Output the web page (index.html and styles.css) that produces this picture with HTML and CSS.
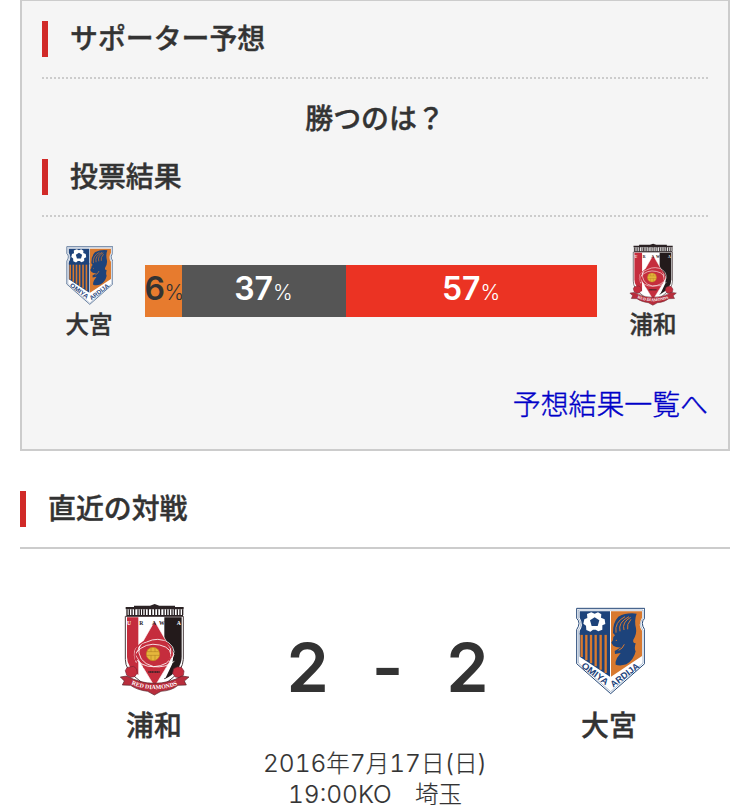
FILE: index.html
```html
<!DOCTYPE html>
<html lang="ja">
<head>
  <meta charset="utf-8">
  <title>サポーター予想</title>
  <link rel="stylesheet" href="styles.css">
</head>

<body>
  <div class="support">
    <h3 class="title">サポーター予想</h3>
    <p class="question">勝つのは？</p>
    <h3 class="title">投票結果</h3>
    <div class="vote">
      <div class="vote-team">
        <svg class="emblem-small" viewBox="30 27 213 279">
          <g id="omiya">
            <path d="M38 43h204v30q-14 13 0 34v102l-102 90-102-90v-102q14-21 0-34z" fill="#fff" stroke="#254878" stroke-width="3"/>
            <path d="M43 48h194v25q-15 15 0 36v98l-97 86-97-86v-98q15-21 0-36z" fill="#fff" stroke="#5c7ba5" stroke-width="1.5"/>
            <path d="M47 52h91v196L47 188v-78q13-18 0-39z" fill="#1d437b"/>
            <path d="M141 52h93v19q-13 21 0 39v76l-93 62z" fill="#d8792f"/>
            <path d="M53 122v67M67 122v77M81 122v86M95 122v95M110 122v105M125 122v115" stroke="#d8792f" stroke-width="7"/>
            <path d="M47 119h91" stroke="#1d437b" stroke-width="5"/>
            <path d="M82 55l10 4 10-4 10 6-1 10 11 5 2 14-9 4v13l-12 5-8-5h-8l-8 6-12-5-1-13-8-6 3-13 9-4-1-12z" fill="#fff"/>
            <path d="M92 70l14 9-5 17H83l-5-17z" fill="#1d437b"/>
            <path d="M218 59q-30-4-55 9-17 18-16 49l6 7q-7 4-6 14l-5 8 6 9q10 7 23 5l-19 11 1 9 17-3-11 15q-6 12-4 20 13 5 32-1 22-12 28-39-5-7 0-24-10-2-7-11 11-17 8-34-6-24 2-44z" fill="#1d437b"/>
            <path d="M156 116q-5-32 27-48M168 112q-7-27 27-44M180 108q-7-23 20-38M191 106q-4-15 10-30M181 151q-5 13-17 18" stroke="#d8792f" stroke-width="3" fill="none"/>
            <circle cx="157" cy="139" r="2" fill="#d8792f"/>
            <path id="omiya-left" d="M50 218l90 67" fill="none"/>
            <path id="omiya-right" d="M148 281l90-69" fill="none"/>
            <text class="omiya-text"><textPath href="#omiya-left" textLength="94" lengthAdjust="spacingAndGlyphs">OMIYA</textPath></text>
            <text class="omiya-text"><textPath href="#omiya-right" textLength="100" lengthAdjust="spacingAndGlyphs">ARDIJA</textPath></text>
          </g>
        </svg>
        <span>大宮</span>
      </div>
      <div class="graph">
        <div class="home" style="width: 37px">6<small>%</small></div>
        <div class="draw" style="width: 164px">37<small>%</small></div>
        <div class="away" style="width: 251px">57<small>%</small></div>
      </div>
      <div class="vote-team">
        <svg class="emblem-small" viewBox="30 24 213 279">
          <g id="urawa">
            <path d="M49 64h174v129q-2 32-34 57l-53 42-53-42q-34-25-34-57z" fill="#fff" stroke="#4a3c3e" stroke-width="3"/>
            <path d="M50 36h25v-4h48l14-5 14 5h47v4h26v7H50zM52 60h170v4H52z" fill="#2b2224"/>
            <path d="M54 43v17M61 43v17M69 43v17M77 36v26M87 43v17M94 43v17M101 43v17M109 43v17M118 36v26M128 43v17M137 32v30M146 43v17M155 36v26M165 43v17M173 43v17M181 43v17M189 43v17M196 36v26M205 43v17M213 43v17M221 43v17" stroke="#2b2224" stroke-width="4"/>
            <path d="M54 67h34v173q-34-24-34-54z" fill="#c52d3d"/>
            <path d="M166 67h52v118q0 42-52 68z" fill="#231a1b"/>
            <path d="M174 148q26 18 16 58l-20 42-14 5 12-52z" fill="#fff"/>
            <path d="M137 78l58 101-58 96-58-96z" fill="#c52d3d" stroke="#fff" stroke-width="2"/>
            <g fill="none" stroke="#fff" stroke-width="2.5">
              <path d="M82 203q-21-49 31-62 34-17 66 2 31 25 2 57"/>
              <path d="M80 174q30-34 72-24 43 9 32 46"/>
              <path d="M91 151q-10 50 43 64 35 4 62-16"/>
              <path d="M184 162q13 38-30 50-42 11-70-16"/>
            </g>
            <path d="M80 197q-10-43 32-61M166 139q38 20 14 58M103 216q27 15 60 2" fill="none" stroke="#c52d3d" stroke-width="4"/>
            <circle cx="132" cy="177" r="20" fill="#e5b63c" stroke="#c48620" stroke-width="2"/>
            <path d="M114 170h35M113 181h38M126 158v12M138 158v12M126 181v15M138 181v15" stroke="#a9761e" stroke-width="1.5" fill="none"/>
            <path d="M118 231h34" stroke="#51232a" stroke-width="6" stroke-dasharray="4 1"/>
            <g class="urawa-name"><text x="54" y="91">U</text><text class="dark" x="91" y="91">R</text><text class="dark" x="129" y="91">A</text><text class="dark" x="150" y="91">W</text><text x="203" y="91">A</text></g>
            <g fill="#c52d3d" stroke="#762333" stroke-width="2">
              <path d="M62 216l12-2 9 8 2 12-8 11-13 2-11-7-4-13 5-9z"/>
              <path d="M205 216l12 1 8 11-2 13-12 7-12-2-8-11 3-14z"/>
            </g>
            <path d="M34 246l20-3q38 22 82 22t83-22l21 3-14 12 6 12-25 1q-19 16-51 18l-20 11-20-11q-32-4-51-18l-25-1 6-12z" fill="#b82d3c" stroke="#552129" stroke-width="2"/>
            <path id="ribbon" d="M67 268q70 29 142 0" fill="none"/>
            <text class="ribbon-text"><textPath href="#ribbon" textLength="142" lengthAdjust="spacingAndGlyphs">RED DIAMONDS</textPath></text>
          </g>
        </svg>
        <span>浦和</span>
      </div>
    </div>
    <div class="more"><a href="#">予想結果一覧へ</a></div>
  </div>

  <div class="recent">
    <h3 class="title">直近の対戦</h3>
    <div class="match">
      <div class="team">
        <svg class="emblem" viewBox="30 24 213 279"><use href="#urawa"/></svg>
        <span>浦和</span>
      </div>
      <div class="score"><span>2</span><span>-</span><span>2</span></div>
      <div class="team">
        <svg class="emblem" viewBox="30 27 213 279"><use href="#omiya"/></svg>
        <span>大宮</span>
      </div>
    </div>
    <p class="date"><span class="num">2016</span>年<span class="num">7</span>月<span class="num">17</span>日<span class="num">(</span>日<span class="num">)</span><br><span class="num">19:00KO</span>　埼玉</p>
  </div>
</body>

</html>
```

FILE: styles.css
```css
* {
  box-sizing: border-box;
}

body {
  margin: 0;
  height: 805px;
  overflow: hidden;
  color: #333;
  background-color: white;
  font-family: Inter, "Noto Sans CJK JP", sans-serif;
}

.support {
  height: 451px;
  margin: 0 20px;
  padding: 20px 20px 0;
  background-color: #f5f5f5;
  border: 2px solid #ccc;
  border-top-width: 1px;
}

.title, .question, .vote-team, .team {
  font-weight: 500;
  -webkit-text-stroke: 0.4px #333;
}

.title {
  display: flex;
  align-items: center;
  height: 58px;
  margin: 0;
  padding-bottom: 20px;
  border-bottom: 2px dotted #ccc;
  font-size: 27.9px;
  line-height: 36px;
}

.title::before {
  content: "";
  width: 6px;
  height: 36px;
  margin-right: 22px;
  background-color: #d12a28;
}

.question {
  margin: 0;
  height: 80px;
  line-height: 80px;
  text-align: center;
  font-size: 27.9px;
}

.vote {
  display: flex;
  justify-content: space-between;
  margin-top: 26px;
}

.vote-team {
  display: flex;
  flex-direction: column;
  align-items: center;
  width: 94px;
  font-size: 23.5px;
  line-height: 36px;
}

.vote-team:last-child {
  width: 110px;
}

.vote-team span {
  margin-top: 1px;
}

.emblem-small {
  width: 48px;
  height: 63px;
  -webkit-text-stroke: 0;
}

.graph {
  display: flex;
  height: 52px;
  margin: 22px 0 0 7px;
  color: white;
  font-size: 32px;
  font-weight: 600;
  line-height: 48px;
}

.graph div {
  text-align: center;
  white-space: nowrap;
}

.graph small {
  font-size: 21px;
  font-weight: 300;
}

.graph .home {
  color: #333;
  background-color: #e77b2e;
  letter-spacing: -0.6px;
}

.draw {
  background-color: #555;
}

.away {
  background-color: #eb3323;
}

.more {
  margin-top: 42px;
  text-align: right;
  font-size: 27.9px;
  line-height: 40px;
  font-weight: 300;
}

.more a {
  color: #0000c8;
  text-decoration: none;
  -webkit-text-stroke: 0.4px #0000c8;
}

.recent {
  margin: 40px 20px 0;
}

.recent .title {
  border-bottom-style: solid;
}

.match {
  display: flex;
  justify-content: space-between;
  padding: 54px 63px 0 76px;
}

.team {
  display: flex;
  flex-direction: column;
  align-items: center;
  width: 116px;
  font-size: 27.9px;
  line-height: 40px;
}

.emblem {
  width: 71px;
  height: 93px;
  margin-bottom: 10px;
  -webkit-text-stroke: 0;
}

.score {
  display: flex;
  justify-content: space-between;
  width: 202px;
  margin: 28px 0 0 12px;
  font-size: 68px;
  font-weight: 600;
  line-height: 72px;
}

.date {
  margin: 2px 0 0;
  text-align: center;
  font-size: 23.5px;
  font-weight: 300;
  line-height: 31px;
  -webkit-text-stroke: 0.2px #333;
}

.num {
  font-size: 24.5px;
  font-variant-numeric: tabular-nums;
}

/* lettering on the club emblems */
.urawa-name {
  fill: white;
  font: bold 17px "Liberation Serif", serif;
}

.urawa-name .dark {
  fill: #2b2224;
}

.ribbon-text {
  fill: white;
  font: bold 18px "Liberation Serif", serif;
}

.omiya-text {
  fill: #1d437b;
  font: bold 27px "Liberation Sans", sans-serif;
}
```
